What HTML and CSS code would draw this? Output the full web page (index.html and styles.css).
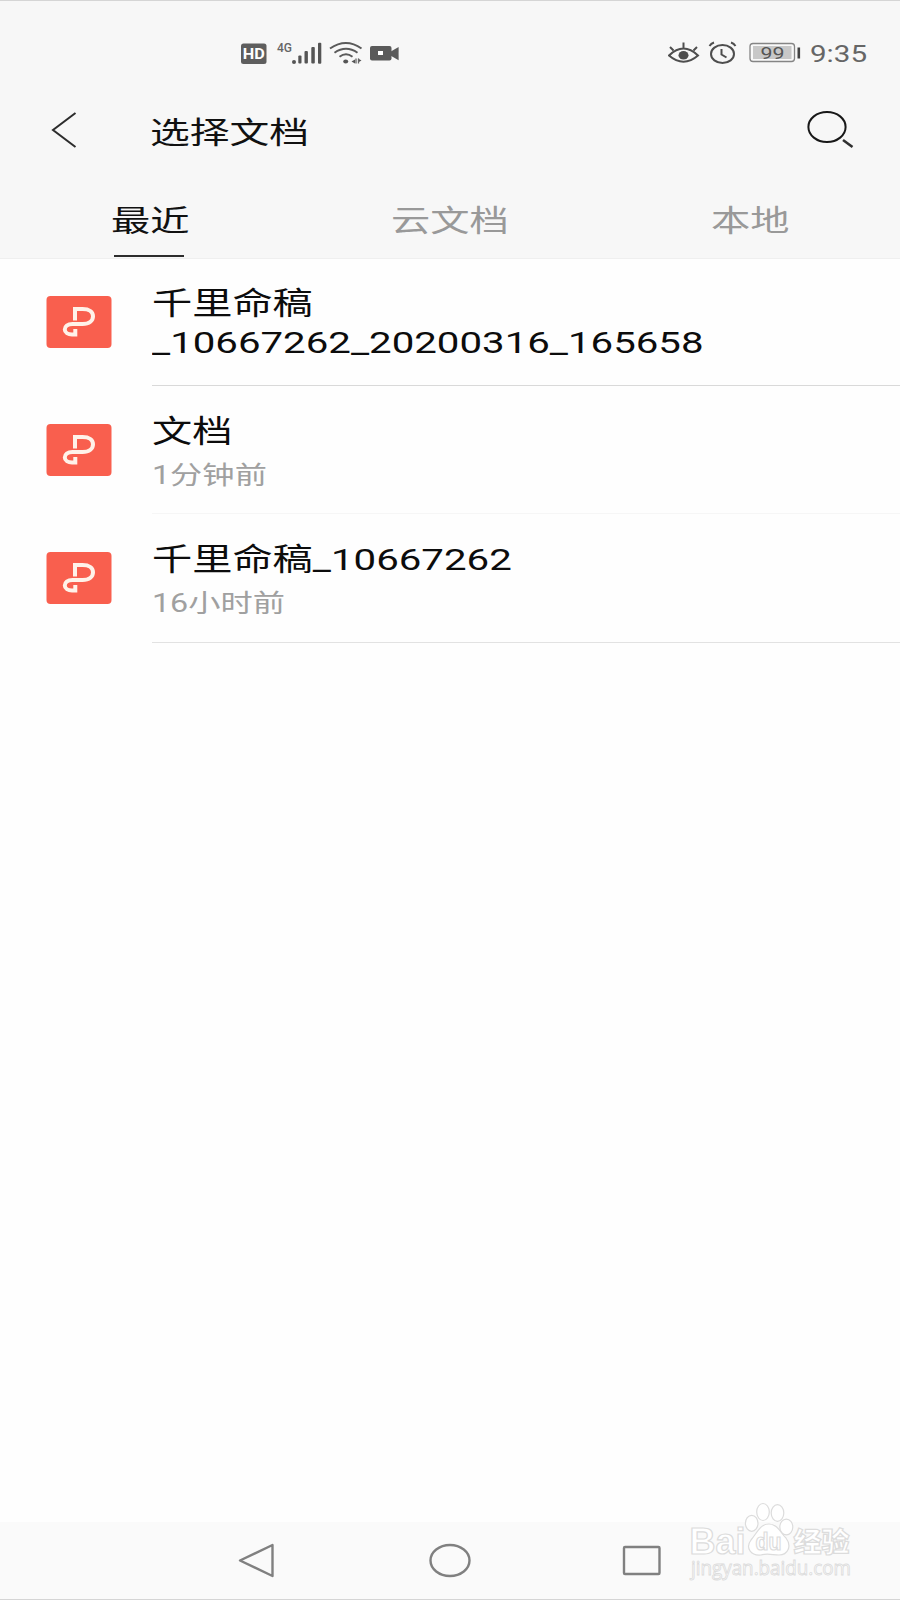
FILE: index.html
```
<!DOCTYPE html>
<html lang="zh-CN">
<head>
<meta charset="utf-8">
<title>选择文档</title>
<link rel="stylesheet" href="styles.css">
</head>
<body>
<div class="screen">
  <header class="header">
    <div class="status">
      <svg class="status-left" width="170" height="30" viewBox="0 0 170 30">
        <rect x="1" y="5.500" width="25.500" height="20.500" rx="2.500" fill="#5e5e5e"/>
        <text class="hd" x="2.800" y="21" textLength="22" lengthAdjust="spacingAndGlyphs">HD</text>
        <text class="net" x="37" y="14.300" textLength="15" lengthAdjust="spacingAndGlyphs">4G</text>
        <g fill="#555">
          <circle cx="54" cy="24" r="2"/>
          <rect x="58.300" y="17.500" width="3.200" height="8" rx="1"/>
          <rect x="64.500" y="13" width="3.400" height="12.500" rx="1"/>
          <rect x="71.300" y="9" width="3.500" height="16.500" rx="1"/>
          <rect x="78" y="4.800" width="3.300" height="20.900" rx="1"/>
        </g>
        <g fill="none" stroke="#5a5a5a" stroke-width="2">
          <path d="M90 10.500Q106 -.5 121.500 10.500"/>
          <path d="M94.500 14.700Q106 6.800 117.500 14.700"/>
          <path d="M99.500 18.700Q106 14 112.500 18.700"/>
        </g>
        <ellipse cx="105.700" cy="23.500" rx="2.500" ry="2" fill="#555"/>
        <path d="M111.500 23.500l3.500-2v4zM121.500 22.500l-3.500-2v4z" fill="#555"/>
        <path d="M116 20.500v5M118.500 20.500v5" stroke="#666" stroke-width="1.300"/>
        <rect x="130" y="8" width="21.500" height="14.500" rx="2" fill="#5a5a5a"/>
        <path d="M150 14l8.600-5v13.300l-8.600-5z" fill="#5a5a5a"/>
        <rect x="138" y="13" width="5" height="4" fill="#fff"/>
      </svg>
      <svg class="status-right" width="202" height="30" viewBox="0 0 202 30">
        <g fill="none" stroke="#4e4e4e" stroke-width="2">
          <path d="M1 17.500Q15.500 3.500 30 17.500Q15.500 30 1 17.500zM15.500 10V4.500M5.500 12.500L2 9M25.500 12.500l3.500-3.500"/>
          <ellipse cx="54.500" cy="16" rx="11.500" ry="9"/>
          <path d="M53.500 11v5.500l5 3M41.500 8q1.500-2.500 4.500-3.500M67.500 8Q66 5.500 63 4.500"/>
        </g>
        <ellipse cx="15.500" cy="17.300" rx="5" ry="4.300" fill="#4e4e4e"/>
        <rect x="82" y="5.500" width="44.500" height="18" rx="3" fill="#f9f9f9" stroke="#858585" stroke-width="1.300"/>
        <rect x="85" y="8" width="38.500" height="13" fill="#c8c8c8"/>
        <text class="battery" x="92.500" y="20.800" textLength="24" lengthAdjust="spacingAndGlyphs">99</text>
        <rect x="129.500" y="9.500" width="2.600" height="11" fill="#444"/>
        <text class="clock" x="142" y="24" textLength="57" lengthAdjust="spacingAndGlyphs">9:35</text>
      </svg>
    </div>
    <div class="titlebar">
      <svg class="back" width="30" height="40" viewBox="0 0 30 40"><path d="M25.500 3L3 20l22.500 17" fill="none" stroke="#2c2c2c" stroke-width="2"/></svg>
      <h1 class="title"><span class="wide">选择文档</span></h1>
      <svg class="search" width="50" height="40" viewBox="0 0 50 40"><ellipse cx="21" cy="17" rx="18.600" ry="15" fill="none" stroke="#181818" stroke-width="2"/><path d="M37 30l9.500 7" stroke="#303030" stroke-width="2.600"/></svg>
    </div>
    <nav class="tabs">
      <div class="tab active"><span class="wide">最近</span></div>
      <div class="tab"><span class="wide">云文档</span></div>
      <div class="tab"><span class="wide">本地</span></div>
    </nav>
  </header>
  <main class="list">
    <div class="row">
      <svg class="file" viewBox="0 0 65 52"><rect width="65" height="52" rx="4" fill="#f95f4e"/><path d="M28.500 24.500V13H36C43 13 46.500 16 46.500 20.200S43 28 36 28H26C21 28 18.300 30.500 18.300 33.500S21.500 38.500 25.500 38.500H28.800V33" fill="none" stroke="#fff2e9" stroke-width="4"/></svg>
      <div class="info"><div class="name"><span class="wide">千里命稿<br>_10667262_20200316_165658</span></div></div>
    </div>
    <div class="row faint">
      <svg class="file" viewBox="0 0 65 52"><rect width="65" height="52" rx="4" fill="#f95f4e"/><path d="M28.500 24.500V13H36C43 13 46.500 16 46.500 20.200S43 28 36 28H26C21 28 18.300 30.500 18.300 33.500S21.500 38.500 25.500 38.500H28.800V33" fill="none" stroke="#fff2e9" stroke-width="4"/></svg>
      <div class="info"><div class="name"><span class="wide">文档</span></div><div class="time"><span class="wide">1分钟前</span></div></div>
    </div>
    <div class="row last">
      <svg class="file" viewBox="0 0 65 52"><rect width="65" height="52" rx="4" fill="#f95f4e"/><path d="M28.500 24.500V13H36C43 13 46.500 16 46.500 20.200S43 28 36 28H26C21 28 18.300 30.500 18.300 33.500S21.500 38.500 25.500 38.500H28.800V33" fill="none" stroke="#fff2e9" stroke-width="4"/></svg>
      <div class="info"><div class="name"><span class="wide">千里命稿_10667262</span></div><div class="time"><span class="wide">16小时前</span></div></div>
    </div>
  </main>
  <footer class="navbar">
    <svg width="40" height="40" viewBox="0 0 40 40"><path d="M3 20.500L35.500 5V36z"/></svg>
    <svg width="44" height="40" viewBox="0 0 44 40"><ellipse cx="22" cy="20.500" rx="19.500" ry="15.500"/></svg>
    <svg width="40" height="40" viewBox="0 0 40 40"><rect x="2" y="7" width="35.500" height="27" rx="1"/></svg>
  </footer>
  <svg class="watermark" width="180" height="100" viewBox="0 0 180 100">
    <g fill="#fff" stroke="#dcdcdc" stroke-width="1.200">
      <text class="wm-brand" x="7.500" y="63.500" textLength="56" lengthAdjust="spacingAndGlyphs">Bai</text>
      <ellipse cx="69.700" cy="33.300" rx="6.300" ry="8"/>
      <ellipse cx="81" cy="22" rx="6.300" ry="8.500"/>
      <ellipse cx="95.500" cy="23" rx="6.300" ry="8.300"/>
      <ellipse cx="104.300" cy="37" rx="6.500" ry="7.800"/>
      <path d="M87 34C96 34 99 44 104 48C110 56 106 65 97 65C91 65 85 63 79 65C69 66 63 58 69 50C75 43 78 34 87 34z"/>
      <text class="wm-du" x="73.500" y="60" textLength="26" lengthAdjust="spacingAndGlyphs">du</text>
      <text class="wm-cn" x="111.500" y="61.500" textLength="56" lengthAdjust="spacingAndGlyphs">经验</text>
      <text class="wm-url" x="9" y="84.500" textLength="160" lengthAdjust="spacingAndGlyphs">jingyan.baidu.com</text>
    </g>
  </svg>
</div>
</body>
</html>
```
FILE: styles.css
```
* { box-sizing: border-box; }
body { margin: 0; background: #fff; font-family: Roboto, "Noto Sans CJK SC", sans-serif; }
.screen {
  position: relative;
  display: flex;
  flex-direction: column;
  width: 900px;
  height: 1600px;
  background: #fefefe;
  border-top: 1px solid #d5d5d5;
  border-bottom: 1px solid #d5d5d5;
  overflow: hidden;
}
svg { display: block; flex: none; }
.header { height: 258px; background: #f7f7f7; border-bottom: 1px solid #efefef; }
.status { display: flex; justify-content: space-between; height: 89px; padding: 37px 30px 0 240px; }
.hd { font: 700 15px Roboto, sans-serif; fill: #fff; }
.net { font: 500 13.5px Roboto, sans-serif; fill: #666; }
.battery { font: 400 17px Roboto, sans-serif; fill: #555; }
.clock { font: 400 24px Roboto, sans-serif; fill: #666; }

/* Text is drawn wider than it is tall across the whole interface. */
.wide { display: inline-block; white-space: nowrap; transform: scaleX(1.34); transform-origin: left center; }

.titlebar { display: flex; align-items: center; height: 80px; padding: 0 44px 0 50px; }
.title { flex: 1; margin: 5px 0 0 70px; font-size: 29.7px; font-weight: 400; line-height: 40px; color: #111; }
.tabs { display: grid; grid-template-columns: repeat(3, 300px); height: 88px; }
.tab { display: flex; justify-content: center; padding-top: 31px; font-size: 29.3px; line-height: 40px; color: #999; }
.tab .wide { transform-origin: center; }
.tab.active { position: relative; color: #111; }
.tab.active::after { content: ""; position: absolute; left: 114px; bottom: 1px; width: 70px; height: 2px; background: #2c2c2c; }
.list { flex: 1; }
.row { display: flex; align-items: flex-start; height: 128px; padding-left: 46px; }
.file { width: 66px; height: 52px; margin-top: 37px; }
.info { flex: 1; height: 127px; margin-left: 40px; padding-top: 26px; border-bottom: 1px solid #d9d9d9; }
.faint .info { border-bottom-color: #f6f6f6; }
.last .info { height: 128px; border-bottom-color: #e2e2e2; }
.name { font-size: 30.4px; line-height: 38.5px; color: #0c0c0c; }
.name .wide { display: block; transform: scaleX(1.323); }
.time { margin-top: 4px; font-size: 25px; line-height: 40px; color: #a0a0a0; }
.time .wide { display: block; transform: scaleX(1.29); }
.navbar { display: flex; gap: 150.5px; height: 77px; padding: 18px 0 0 237px; background: #fafafa; }
.navbar svg { fill: none; stroke: #808080; stroke-width: 2.4; stroke-linejoin: round; }
.watermark { position: absolute; left: 682px; top: 1489px; }
.wm-brand { font: 700 36px "Liberation Sans", sans-serif; }
.wm-du { font: 700 23px "Liberation Sans", sans-serif; }
.wm-cn { font: 900 27px "Noto Sans CJK SC", sans-serif; }
.wm-url { font: 400 20px "Open Sans", sans-serif; stroke-width: .9px; }
```
